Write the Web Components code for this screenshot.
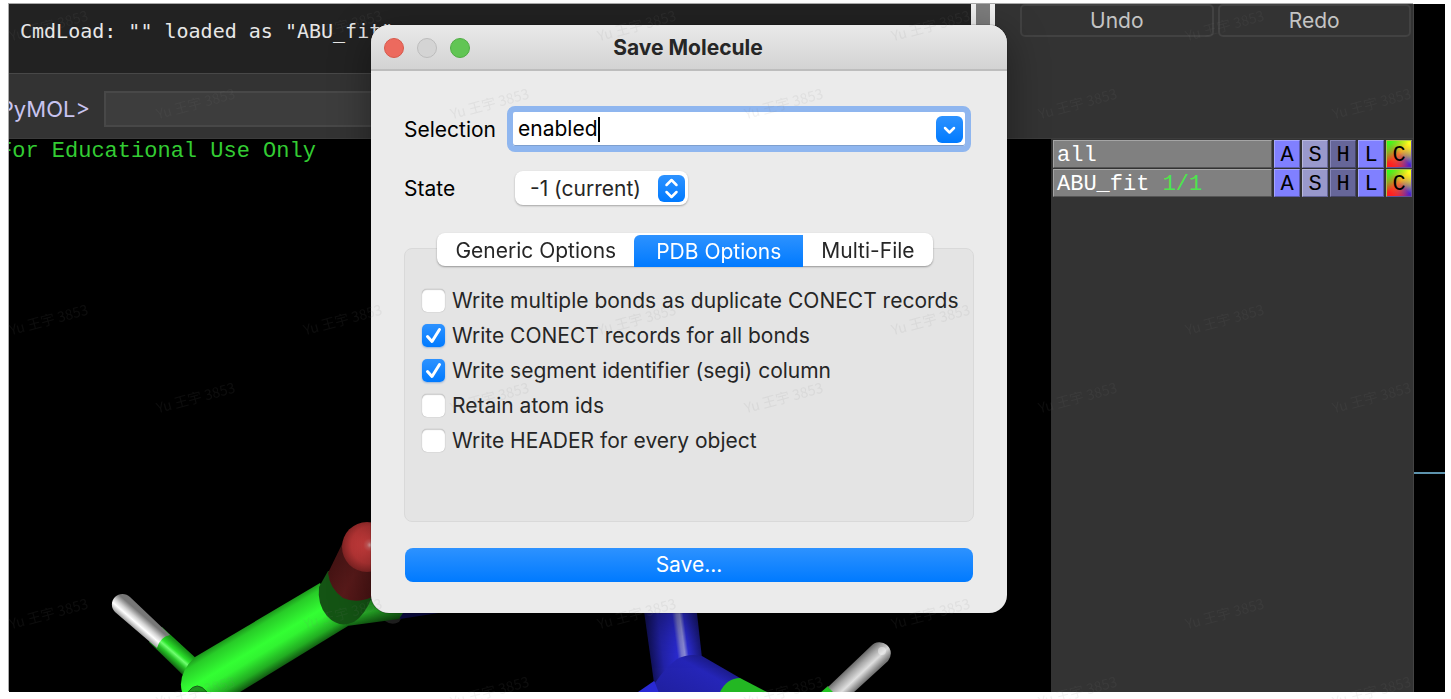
<!DOCTYPE html>
<html lang="en">
<head>
<meta charset="utf-8">
<title>PyMOL</title>
<style>
	body {
		margin: 0;
		background: #fff;
		font-family: Inter, "Liberation Sans", sans-serif;
	}
</style>
</head>
<body>
<mol-desktop>
	<mol-console slot="console">CmdLoad: "" loaded as "ABU_fit"</mol-console>
	<mol-history slot="history"></mol-history>
	<mol-viewer slot="viewer">For Educational Use Only</mol-viewer>
	<mol-objects slot="objects">
		<mol-object name="all"></mol-object>
		<mol-object name="ABU_fit" state="1/1"></mol-object>
	</mol-objects>
	<mol-dialog slot="dialog" heading="Save Molecule">
		<mol-combo label="Selection" value="enabled"></mol-combo>
		<mol-select label="State" value="-1 (current)"></mol-select>
		<mol-tabs tabs="Generic Options|PDB Options|Multi-File" selected="1">
			<mol-check>Write multiple bonds as duplicate CONECT records</mol-check>
			<mol-check checked>Write CONECT records for all bonds</mol-check>
			<mol-check checked>Write segment identifier (segi) column</mol-check>
			<mol-check>Retain atom ids</mol-check>
			<mol-check>Write HEADER for every object</mol-check>
		</mol-tabs>
		<mol-button>Save...</mol-button>
	</mol-dialog>
</mol-desktop>
<mol-watermark text="Yu 王宇 3853"></mol-watermark>

<script>
class MolElement extends HTMLElement {
	constructor() {
		super();
		this._shadow = this.attachShadow({ mode: "open" });
	}

	connectedCallback() {
		this._shadow.innerHTML = this.render();
	}
}

///////////////////////////////////////////// Desktop //////////////////////////////////////////////

customElements.define("mol-desktop", class extends MolElement {
	render() {
		return `
<style>
	:host {
		display: flex;
		box-sizing: border-box;
		min-height: 100vh;
		padding: 4px 6px 7px 9px;
	}
	.app {
		flex: 1;
		display: flex;
		overflow: hidden;
		background: #333;
		border-right: 1px solid #444;
		box-shadow: -1px -1px 0 #aaa;
	}
	/* the window hangs over the left edge of the screen */
	.window {
		flex: 1;
		display: flex;
		flex-direction: column;
		min-width: 0;
		margin-left: -10px;
	}
	.top {
		display: grid;
		grid-template-columns: 1fr 442px;
		height: 134px;
		border-bottom: 1px solid #3c3c3c;
	}
	.main {
		flex: 1;
		display: grid;
		grid-template-columns: 1fr 362px;
	}
	.outside {
		position: relative;
		width: 31px;
		background: #000;
	}
	.outside i {
		position: absolute;
		top: 68%;
		width: 100%;
		height: 2px;
		background: #5d93ad;
	}
	::slotted([slot="dialog"]) {
		position: absolute;
		left: 371px;
		top: 25px;
		width: 636px;
	}
</style>
<div class="app">
	<div class="window">
		<div class="top"><slot name="console"></slot><slot name="history"></slot></div>
		<div class="main"><slot name="viewer"></slot><slot name="objects"></slot></div>
	</div>
</div>
<div class="outside"><i></i></div>
<slot name="dialog"></slot>
`;
	}
});

customElements.define("mol-console", class extends MolElement {
	render() {
		return `
<style>
	:host {
		display: flex;
		flex-direction: column;
		min-width: 0;
	}
	.log {
		height: 70px;
		box-sizing: border-box;
		padding: 15px 21px;
		background: #222;
		border-bottom: 1px solid #484848;
		color: #e8e8e8;
		font: 20px/24px "DejaVu Sans Mono", monospace;
		white-space: pre;
	}
	.command {
		flex: 1;
		display: flex;
		align-items: center;
		gap: 14px;
		padding: 6px 4px 0 0;
	}
	label {
		box-sizing: border-box;
		width: 91px;
		color: #c8c4f0;
		font-size: 22px;
		line-height: 28px;
		text-align: right;
	}
	input {
		flex: 1;
		box-sizing: border-box;
		height: 36px;
		background: #3d3d3d;
		border: 2px solid #484848;
		color: #e8e8e8;
		font: 20px "DejaVu Sans Mono", monospace;
	}
</style>
<div class="log"><slot></slot></div>
<div class="command"><label for="cmd">PyMOL&gt;</label><input id="cmd" type="text"></div>
`;
	}
});

customElements.define("mol-history", class extends MolElement {
	render() {
		return `
<style>
	:host { display: flex; }
	.bar {
		width: 14px;
		margin-bottom: 66px;
		background: #7d7d7d;
		border: solid #f2f2f2;
		border-width: 0 5px;
	}
	.buttons {
		flex: 1;
		display: grid;
		grid-template-columns: 1fr 1fr;
		gap: 4px;
		align-items: start;
		padding: 0 2px 0 25px;
	}
	button {
		height: 33px;
		padding: 0;
		background: #333;
		border: 2px solid #424242;
		border-radius: 5px;
		color: #c4c4c4;
		font: 21px Inter, sans-serif;
	}
</style>
<div class="bar"></div>
<div class="buttons"><button type="button">Undo</button><button type="button">Redo</button></div>
`;
	}
});

////////////////////////////////////////////// Viewer //////////////////////////////////////////////

customElements.define("mol-viewer", class extends MolElement {
	render() {
		return `
<style>
	:host {
		position: relative;
		display: block;
		overflow: hidden;
		background: #000;
		color: #33cc33;
		font: 22px/26px "Liberation Mono", monospace;
	}
	svg {
		position: absolute;
		left: 0;
		bottom: 0;
	}
</style>
<slot></slot>
<svg width="1052" height="553" viewBox="-1 139 1052 553" aria-hidden="true">
	<defs>
		<linearGradient id="carbon" gradientUnits="userSpaceOnUse" x1="257" y1="620" x2="284" y2="665">
			<stop offset="0" stop-color="#1c951c"/><stop offset=".12" stop-color="#28cc28"/><stop offset=".45" stop-color="#33ff33"/><stop offset=".6" stop-color="#31f431"/><stop offset=".85" stop-color="#22ad22"/><stop offset="1" stop-color="#125c12"/>
		</linearGradient>
		<linearGradient id="hydroA" gradientUnits="userSpaceOnUse" x1="147" y1="619" x2="134" y2="634">
			<stop offset="0" stop-color="#777"/><stop offset=".3" stop-color="#d4d4d4"/><stop offset=".5" stop-color="#fff"/><stop offset=".7" stop-color="#bbb"/><stop offset="1" stop-color="#555"/>
		</linearGradient>
		<linearGradient id="carbonA" gradientUnits="userSpaceOnUse" x1="182" y1="647" x2="169" y2="662">
			<stop offset="0" stop-color="#189018"/><stop offset=".35" stop-color="#2be32b"/><stop offset=".5" stop-color="#70ff70"/><stop offset=".7" stop-color="#27c527"/><stop offset="1" stop-color="#136013"/>
		</linearGradient>
		<linearGradient id="hydroB" gradientUnits="userSpaceOnUse" x1="849" y1="664" x2="865" y2="681">
			<stop offset="0" stop-color="#555"/><stop offset=".35" stop-color="#aaa"/><stop offset=".65" stop-color="#e0e0e0"/><stop offset="1" stop-color="#777"/>
		</linearGradient>
		<linearGradient id="nitro" gradientUnits="userSpaceOnUse" x1="647" y1="637" x2="700" y2="630">
			<stop offset="0" stop-color="#101055"/><stop offset=".25" stop-color="#2222a8"/><stop offset=".52" stop-color="#2a2ad0"/><stop offset=".6" stop-color="#7777cf"/><stop offset=".66" stop-color="#8c8cd8"/><stop offset=".73" stop-color="#2c2cd2"/><stop offset="1" stop-color="#15156b"/>
		</linearGradient>
		<linearGradient id="nitroB" gradientUnits="userSpaceOnUse" x1="715" y1="660" x2="690" y2="705">
			<stop offset="0" stop-color="#191980"/><stop offset=".3" stop-color="#2525b8"/><stop offset="1" stop-color="#2020a2"/>
		</linearGradient>
		<radialGradient id="oxygen" gradientUnits="userSpaceOnUse" cx="370" cy="545" r="31">
			<stop offset="0" stop-color="#f0b0b0"/><stop offset=".1" stop-color="#df6060"/><stop offset=".22" stop-color="#d64040"/><stop offset=".6" stop-color="#bd3737"/><stop offset="1" stop-color="#701e1e"/>
		</radialGradient>
		<linearGradient id="oxyBody" gradientUnits="userSpaceOnUse" x1="330" y1="565" x2="375" y2="590">
			<stop offset="0" stop-color="#431313"/><stop offset=".5" stop-color="#591a1a"/><stop offset="1" stop-color="#4b1414"/>
		</linearGradient>
		<linearGradient id="joint" gradientUnits="userSpaceOnUse" x1="360" y1="600" x2="365" y2="626">
			<stop offset="0" stop-color="#1f8f1f"/><stop offset=".5" stop-color="#29b529"/><stop offset="1" stop-color="#0d480d"/>
		</linearGradient>
	</defs>

	<path d="M385 621q7 5 14 1l3-5h-17z" fill="#242424"/>
	<path d="M398 600h60v10l-58 9z" fill="#0b0b4a"/>
	<path d="M347 600h58v10l-6 9-52 7z" fill="url(#joint)"/>

	<path d="M162 627l37 34-14 16-36-35z" fill="url(#carbonA)"/>
	<path d="M130 597l40 38q-10 2-13 13l-42-36a10 10 0 1 1 15-15z" fill="url(#hydroA)"/>
	<path d="M195 657L320 583l28 43-108 66h-58q-5-18 13-35z" fill="url(#carbon)"/>
	<path d="M188 692q9-12 19 0z" fill="#1c931c" stroke="#125c12"/>
	<path d="M328 571L319 587q-2 17 8 29 12 13 27 6 11-7 18-25v-24z" fill="#145414"/>
	<path d="M344 540L328 573q2 16 15 25 14 6 29-1V545z" fill="url(#oxyBody)"/>
	<circle cx="367" cy="547" r="25" fill="url(#oxygen)"/>

	<path d="M643 604h53l6 54-22 34h-21l-5-9z" fill="url(#nitro)"/>
	<path d="M638 692l16-11 8 11z" fill="#2929d4"/>
	<path d="M655 683q9-14 22-24 12-6 25-3l38 22-20 15h-61z" fill="url(#nitroB)"/>
	<path d="M720 692q7-14 20-14l29 15z" fill="#23b723"/>
	<path d="M820 693l8-7 7 7z" fill="#24c424"/>
	<path d="M828 687l43-41a11 11 0 0 1 17 15l-35 32h-19z" fill="url(#hydroB)"/>
	<circle cx="882" cy="651" r="4" fill="#fff" opacity=".45"/>
</svg>
`;
	}
});

////////////////////////////////////////// Object panel ////////////////////////////////////////////

customElements.define("mol-objects", class extends MolElement {
	render() {
		return `
<style>
	:host {
		display: flex;
		flex-direction: column;
		gap: 1px;
		padding: 1px 1px 0 2px;
		background: #333;
	}
</style>
<slot></slot>
`;
	}
});

customElements.define("mol-object", class extends MolElement {
	render() {
		const state = this.getAttribute("state") || "";
		return `
<style>
	:host {
		display: grid;
		grid-template-columns: 1fr repeat(5, 26px);
		gap: 2px;
		height: 28px;
		font: 22px/24px "Liberation Mono", monospace;
	}
	.name, button {
		box-sizing: border-box;
		border: 1px solid;
		border-color: #a5a5a5 #555 #555 #a5a5a5;
	}
	.name {
		padding: 3px 3px 0;
		height: 28px;
		background: #808080;
		color: #fff;
	}
	.name span { color: #4de64d; }
	button {
		height: 28px;
		padding: 3px 0 0;
		font: inherit;
		line-height: 23px;
		color: #000;
		background: #8080ff;
		border-color: #a6a6ff #5b5baa #5b5baa #a6a6ff;
	}
	.s { background: #9999cc; border-color: #b8b8dd #666699 #666699 #b8b8dd; }
	.h { background: #666699; border-color: #8888bb #444466 #444466 #8888bb; }
	.c {
		border-color: #b0c050 #60509a #60509a #b0c050;
		background:
			linear-gradient(135deg, #33ff1a 5%, transparent 48%),
			linear-gradient(225deg, #ffff1a 8%, transparent 50%),
			linear-gradient(45deg, #ff2020 12%, transparent 60%),
			linear-gradient(315deg, #2020ff 8%, #e69030 50%);
	}
</style>
<div class="name">${this.getAttribute("name")} <span>${state}</span></div>
<button type="button">A</button>
<button type="button" class="s">S</button>
<button type="button" class="h">H</button>
<button type="button">L</button>
<button type="button" class="c">C</button>
`;
	}
});

////////////////////////////////////////////// Dialog //////////////////////////////////////////////

customElements.define("mol-dialog", class extends MolElement {
	render() {
		return `
<style>
	:host {
		display: block;
		overflow: hidden;
		background: #ebebeb;
		border-radius: 18px;
		box-shadow: 0 0 1px #000, 0 10px 40px rgba(0, 0, 0, .4);
	}
	header {
		display: grid;
		grid-template-columns: 1fr auto 1fr;
		align-items: center;
		height: 44px;
		padding: 1px 15px 0 13px;
		box-sizing: border-box;
		height: 46px;
		background: linear-gradient(#e9e9e9, #d3d3d3);
		border-bottom: 2px solid #bdbdbd;
	}
	.lights {
		display: flex;
		gap: 13px;
	}
	.lights button {
		box-sizing: border-box;
		width: 20px;
		height: 20px;
		padding: 0;
		border: 1px solid #d65a4c;
		border-radius: 50%;
		background: #ec6a5e;
	}
	.lights .min { background: #d4d4d4; border-color: #bcbcbc; }
	.lights .max { background: #61c554; border-color: #50ad44; }
	h1 {
		margin: 0;
		color: #262626;
		font-size: 21px;
		font-weight: 700;
		line-height: 26px;
	}
	.body {
		display: flex;
		flex-direction: column;
		gap: 16px;
		padding: 35px 33px 31px;
	}
</style>
<header>
	<div class="lights">
		<button type="button" aria-label="Close"></button>
		<button type="button" class="min" aria-label="Minimize"></button>
		<button type="button" class="max" aria-label="Zoom"></button>
	</div>
	<h1>${this.getAttribute("heading")}</h1>
</header>
<div class="body"><slot></slot></div>
`;
	}
});

customElements.define("mol-combo", class extends MolElement {
	render() {
		return `
<style>
	:host {
		display: grid;
		grid-template-columns: 103px 1fr;
		align-items: center;
		padding-right: 3px;
		color: #000;
		font-size: 21px;
	}
	.box {
		display: flex;
		align-items: center;
		box-sizing: border-box;
		height: 46px;
		padding: 0 2px 0 5px;
		border: 6px solid #8fb6ef;
		border-radius: 8px;
		background: #fff;
		box-shadow: inset 0 -1px 0 #7d9fcf;
	}
	input {
		field-sizing: content;
		padding: 0;
		border: 0;
		outline: 0;
		background: none;
		color: inherit;
		font: inherit;
		line-height: 28px;
	}
	.caret {
		width: 2px;
		height: 25px;
		background: #000;
	}
	button {
		width: 27px;
		height: 27px;
		margin-left: auto;
		padding: 0;
		border: 0;
		border-radius: 6px;
		background: linear-gradient(#2d92ff, #007aff);
	}
	svg { display: block; }
</style>
<label for="box">${this.getAttribute("label")}</label>
<div class="box">
	<input id="box" type="text" value="${this.getAttribute("value")}"><span class="caret"></span>
	<button type="button" aria-label="Show list"><svg width="27" height="27" viewBox="0 0 27 27" fill="none" stroke="#fff" stroke-width="2.500" stroke-linecap="round" stroke-linejoin="round"><path d="M9 12l4.500 4.500 4.500-4.500"/></svg></button>
</div>
`;
	}
});

customElements.define("mol-select", class extends MolElement {
	render() {
		return `
<style>
	:host {
		display: grid;
		grid-template-columns: 111px 173px;
		align-items: center;
		margin: 3px 0 12px;
		color: #000;
		font-size: 21px;
	}
	.box {
		display: grid;
		align-items: center;
	}
	select, svg { grid-area: 1 / 1; }
	select {
		appearance: none;
		height: 34px;
		padding: 0 32px 0 15px;
		border: 0;
		border-radius: 8px;
		background: #fff;
		box-shadow: 0 1px 2px rgba(0, 0, 0, .3);
		color: #262626;
		font: inherit;
	}
	svg {
		justify-self: end;
		margin-right: 3px;
		border-radius: 6px;
		background: linear-gradient(#2d92ff, #007aff);
		pointer-events: none;
	}
</style>
<label for="list">${this.getAttribute("label")}</label>
<div class="box">
	<select id="list"><option>${this.getAttribute("value")}</option></select>
	<svg width="27" height="27" viewBox="0 0 27 27" fill="none" stroke="#fff" stroke-width="2.500" stroke-linecap="round" stroke-linejoin="round"><path d="M8.500 10l5-5 5 5M8.500 17l5 5 5-5"/></svg>
</div>
`;
	}
});

customElements.define("mol-tabs", class extends MolElement {
	render() {
		const selected = Number(this.getAttribute("selected"));
		const tabs = this.getAttribute("tabs").split("|").map((text, i) =>
			`<button type="button" role="tab" aria-selected="${i === selected}">${text}</button>`).join("");
		return `
<style>
	:host {
		display: flex;
		flex-direction: column;
	}
	.tabs {
		z-index: 1;
		align-self: center;
		display: flex;
		margin: 0 8px -18px 0;
		border-radius: 8px;
		background: #fff;
		box-shadow: 0 1px 2px rgba(0, 0, 0, .35);
	}
	button {
		height: 33px;
		padding: 2px 18px 0;
		border: 0;
		border-radius: 8px;
		background: none;
		color: #262626;
		font: 21px Inter, sans-serif;
	}
	button[aria-selected="true"] {
		height: 32px;
		margin: 2px 0 -1px;
		padding: 0 22px;
		border-radius: 6px 0 0 0;
		background: linear-gradient(#2d92ff, #007aff);
		color: #fff;
	}
	.panel {
		display: flex;
		flex-direction: column;
		box-sizing: border-box;
		min-height: 274px;
		padding: 34px 17px;
		border: 1px solid #d9d9d9;
		border-radius: 8px;
		background: #e4e4e4;
	}
</style>
<div class="tabs" role="tablist">${tabs}</div>
<div class="panel" role="tabpanel"><slot></slot></div>
`;
	}
});

customElements.define("mol-check", class extends MolElement {
	render() {
		return `
<style>
	:host { display: block; }
	label {
		display: flex;
		align-items: center;
		gap: 7px;
		height: 35px;
		color: #262626;
		font-size: 21px;
		white-space: nowrap;
	}
	.box { display: grid; }
	input, svg { grid-area: 1 / 1; }
	input {
		appearance: none;
		width: 23px;
		height: 23px;
		margin: 0;
		border-radius: 5px;
		background: #fff;
		box-shadow: inset 0 1px 1px rgba(0, 0, 0, .2), 0 0 1px rgba(0, 0, 0, .35);
	}
	input:checked {
		background: linear-gradient(#2d92ff, #007aff);
		box-shadow: 0 1px 2px rgba(0, 90, 200, .35);
	}
	svg {
		visibility: hidden;
		pointer-events: none;
	}
	input:checked + svg { visibility: visible; }
</style>
<label>
	<span class="box">
		<input type="checkbox" ${this.hasAttribute("checked") ? "checked" : ""}>
		<svg width="23" height="23" viewBox="0 0 23 23" fill="none" stroke="#fff" stroke-width="3" stroke-linecap="round" stroke-linejoin="round"><path d="M5.500 12.500l4.500 5 7.500-12"/></svg>
	</span>
	<span><slot></slot></span>
</label>
`;
	}
});

customElements.define("mol-button", class extends MolElement {
	render() {
		return `
<style>
	:host {
		display: flex;
		margin: 10px 1px 0;
	}
	button {
		flex: 1;
		height: 34px;
		padding: 0 0 2px;
		border: 0;
		border-radius: 8px;
		background: linear-gradient(#2d92ff, #007aff);
		color: #fff;
		font: 21px Inter, sans-serif;
	}
</style>
<button type="button"><slot></slot></button>
`;
	}
});

//////////////////////////////////////////// Watermark /////////////////////////////////////////////

customElements.define("mol-watermark", class extends MolElement {
	render() {
		const text = this.getAttribute("text");
		const tile = `<div class="tile"><span>${text}</span><span>${text}</span></div>`;
		return `
<style>
	:host {
		position: fixed;
		inset: 0;
		display: grid;
		grid-template-columns: repeat(5, 294px);
		grid-auto-rows: 294px;
		overflow: hidden;
		pointer-events: none;
		color: rgba(128, 128, 128, .1);
		font: 14px/20px "Noto Sans CJK SC", sans-serif;
	}
	.tile {
		display: grid;
		grid-template-columns: 1fr 1fr;
		align-items: start;
		justify-items: center;
		padding-top: 15px;
		margin-left: -25px;
		margin-right: 25px;
	}
	span {
		white-space: nowrap;
		transform: rotate(-15deg);
	}
	span + span { margin-top: 78px; }
</style>
${tile.repeat(15)}
`;
	}
});
</script>
</body>
</html>
